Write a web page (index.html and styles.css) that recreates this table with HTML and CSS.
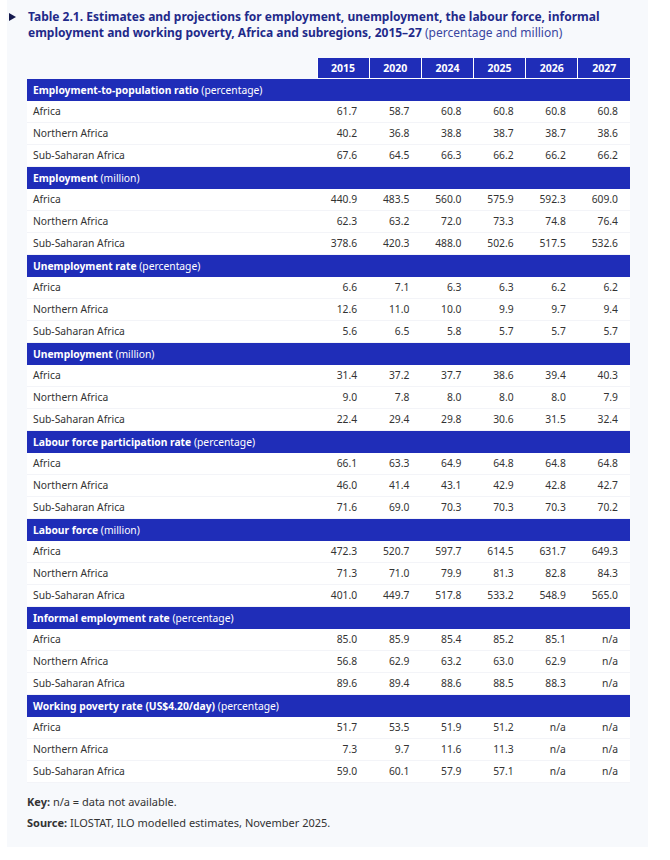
FILE: index.html
```html
<!DOCTYPE html>
<html lang="en">
<head>
<meta charset="utf-8">
<title>Table 2.1</title>
<link rel="stylesheet" href="styles.css">
</head>
<body>
<div class="panel">
  <div class="title">
    <span class="tri"></span>
    <p class="title-text"><b>Table 2.1. Estimates and projections for employment, unemployment, the labour force, informal employment and working poverty, Africa and subregions, 2015–27</b> <span class="unit">(percentage and million)</span></p>
  </div>
  <table class="data">
    <colgroup><col class="c-label"><col><col><col><col><col><col></colgroup>
    <thead>
      <tr class="years"><th class="blank"></th><th>2015</th><th>2020</th><th>2024</th><th>2025</th><th>2026</th><th>2027</th></tr>
    </thead>
    <tbody>
      <tr class="sec"><td colspan="7"><b>Employment-to-population ratio</b> (percentage)</td></tr>
      <tr><td>Africa</td><td>61.7</td><td>58.7</td><td>60.8</td><td>60.8</td><td>60.8</td><td>60.8</td></tr>
      <tr><td>Northern Africa</td><td>40.2</td><td>36.8</td><td>38.8</td><td>38.7</td><td>38.7</td><td>38.6</td></tr>
      <tr><td>Sub-Saharan Africa</td><td>67.6</td><td>64.5</td><td>66.3</td><td>66.2</td><td>66.2</td><td>66.2</td></tr>

      <tr class="sec"><td colspan="7"><b>Employment</b> (million)</td></tr>
      <tr><td>Africa</td><td>440.9</td><td>483.5</td><td>560.0</td><td>575.9</td><td>592.3</td><td>609.0</td></tr>
      <tr><td>Northern Africa</td><td>62.3</td><td>63.2</td><td>72.0</td><td>73.3</td><td>74.8</td><td>76.4</td></tr>
      <tr><td>Sub-Saharan Africa</td><td>378.6</td><td>420.3</td><td>488.0</td><td>502.6</td><td>517.5</td><td>532.6</td></tr>

      <tr class="sec"><td colspan="7"><b>Unemployment rate</b> (percentage)</td></tr>
      <tr><td>Africa</td><td>6.6</td><td>7.1</td><td>6.3</td><td>6.3</td><td>6.2</td><td>6.2</td></tr>
      <tr><td>Northern Africa</td><td>12.6</td><td>11.0</td><td>10.0</td><td>9.9</td><td>9.7</td><td>9.4</td></tr>
      <tr><td>Sub-Saharan Africa</td><td>5.6</td><td>6.5</td><td>5.8</td><td>5.7</td><td>5.7</td><td>5.7</td></tr>

      <tr class="sec"><td colspan="7"><b>Unemployment</b> (million)</td></tr>
      <tr><td>Africa</td><td>31.4</td><td>37.2</td><td>37.7</td><td>38.6</td><td>39.4</td><td>40.3</td></tr>
      <tr><td>Northern Africa</td><td>9.0</td><td>7.8</td><td>8.0</td><td>8.0</td><td>8.0</td><td>7.9</td></tr>
      <tr><td>Sub-Saharan Africa</td><td>22.4</td><td>29.4</td><td>29.8</td><td>30.6</td><td>31.5</td><td>32.4</td></tr>

      <tr class="sec"><td colspan="7"><b>Labour force participation rate</b> (percentage)</td></tr>
      <tr><td>Africa</td><td>66.1</td><td>63.3</td><td>64.9</td><td>64.8</td><td>64.8</td><td>64.8</td></tr>
      <tr><td>Northern Africa</td><td>46.0</td><td>41.4</td><td>43.1</td><td>42.9</td><td>42.8</td><td>42.7</td></tr>
      <tr><td>Sub-Saharan Africa</td><td>71.6</td><td>69.0</td><td>70.3</td><td>70.3</td><td>70.3</td><td>70.2</td></tr>

      <tr class="sec"><td colspan="7"><b>Labour force</b> (million)</td></tr>
      <tr><td>Africa</td><td>472.3</td><td>520.7</td><td>597.7</td><td>614.5</td><td>631.7</td><td>649.3</td></tr>
      <tr><td>Northern Africa</td><td>71.3</td><td>71.0</td><td>79.9</td><td>81.3</td><td>82.8</td><td>84.3</td></tr>
      <tr><td>Sub-Saharan Africa</td><td>401.0</td><td>449.7</td><td>517.8</td><td>533.2</td><td>548.9</td><td>565.0</td></tr>

      <tr class="sec"><td colspan="7"><b>Informal employment rate</b> (percentage)</td></tr>
      <tr><td>Africa</td><td>85.0</td><td>85.9</td><td>85.4</td><td>85.2</td><td>85.1</td><td>n/a</td></tr>
      <tr><td>Northern Africa</td><td>56.8</td><td>62.9</td><td>63.2</td><td>63.0</td><td>62.9</td><td>n/a</td></tr>
      <tr><td>Sub-Saharan Africa</td><td>89.6</td><td>89.4</td><td>88.6</td><td>88.5</td><td>88.3</td><td>n/a</td></tr>

      <tr class="sec"><td colspan="7"><b>Working poverty rate (US$4.20/day)</b> (percentage)</td></tr>
      <tr><td>Africa</td><td>51.7</td><td>53.5</td><td>51.9</td><td>51.2</td><td>n/a</td><td>n/a</td></tr>
      <tr><td>Northern Africa</td><td>7.3</td><td>9.7</td><td>11.6</td><td>11.3</td><td>n/a</td><td>n/a</td></tr>
      <tr><td>Sub-Saharan Africa</td><td>59.0</td><td>60.1</td><td>57.9</td><td>57.1</td><td>n/a</td><td>n/a</td></tr>
    </tbody>
  </table>
  <div class="notes">
    <p><b>Key:</b> n/a = data not available.</p>
    <p><b>Source:</b> ILOSTAT, ILO modelled estimates, November 2025.</p>
  </div>
</div>
</body>
</html>
```
FILE: styles.css
```css
html, body {
  margin: 0;
  padding: 0;
  background: #ffffff;
}
body {
  font-family: "Noto Sans", "Open Sans", sans-serif;
  color: #333333;
}
.panel {
  margin-left: 7px;
  width: 641px;
  height: 847px;
  box-sizing: border-box;
  background: #f7f9fc;
  padding: 9px 18px 0 20px;
}
.title {
  position: relative;
  margin-left: 1px;
}
.tri {
  position: absolute;
  left: -19px;
  top: 4px;
  width: 0;
  height: 0;
  border-top: 4px solid transparent;
  border-bottom: 4px solid transparent;
  border-left: 7px solid #151a4e;
}
.title-text {
  margin: 0;
  font-size: 12px;
  line-height: 16px;
  color: #1f2a8a;
}
.title-text b {
  font-weight: 700;
}
.title-text .unit {
  color: #3a46a0;
}
table.data {
  margin-top: 17px;
  width: 603px;
  border-collapse: collapse;
  table-layout: fixed;
  font-size: 10.3px;
  line-height: 13px;
}
col.c-label {
  width: 290px;
}
.years th {
  height: 20px;
  padding: 0;
  background: #1f2db8;
  color: #ffffff;
  font-weight: 700;
  font-size: 10.5px;
  text-align: center;
  border-left: 1px solid #ffffff;
  border-bottom: 1px solid #ffffff;
}
.years th.blank {
  background: transparent;
  border: none;
}
tbody tr td {
  height: 21px;
  padding: 0 12px 0 6px;
  background: #ffffff;
  text-align: right;
  color: #333333;
  border-bottom: 1px solid #f3f4f8;
}
tbody tr td:first-child {
  text-align: left;
}
tbody tr.sec td {
  height: 22px;
  padding: 0 6px;
  background: #1f2db8;
  color: #ffffff;
  font-size: 10.3px;
  text-align: left;
  border-bottom: none;
}
.sec td b {
  font-weight: 700;
}
.notes {
  margin-top: 12px;
  font-size: 11px;
  color: #333333;
}
.notes p {
  margin: 0 0 7px 0;
  line-height: 14px;
}
.notes b {
  font-weight: 700;
}
```
